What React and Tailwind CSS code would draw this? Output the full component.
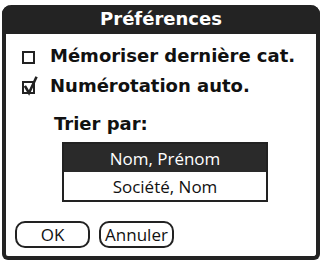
export default function App() {
  const font = { fontFamily: '"DejaVu Sans", sans-serif' };
  const thin = { fontFamily: '"Open Sans", sans-serif' };
  return (
    <div className="w-[326px] h-[262px] bg-white relative" style={font}>
      <div className="absolute left-[2px] top-[5px] w-[318px] h-[255px] border-[4px] border-t-0 border-[#232323] rounded-t-[9px] rounded-b-[6px] flex flex-col">
        <div className="h-[29px] bg-[#232323] -mx-[4px] rounded-t-[9px] flex items-center justify-center text-white font-bold text-[18px] leading-none pb-[1px]">
          Préférences
        </div>
        <div className="flex flex-col pl-[16px] pt-[13px]">
          <div className="flex items-center h-[18px]">
            <div className="w-[13px] h-[13px] min-w-[13px] shrink-0 border-[2px] border-[#222] mt-[2px]" />
            <span className="ml-[15px] font-bold text-[18px] leading-none text-[#111]">Mémoriser dernière cat.</span>
          </div>
          <div className="flex items-center h-[18px] mt-[12px]">
            <div className="w-[13px] h-[13px] min-w-[13px] shrink-0 border-[2px] border-[#222] relative mt-[2px]">
              <svg className="absolute -left-[2px] -top-[7px] overflow-visible" width="18" height="18" viewBox="0 0 18 18">
                <path d="M3.5 11 L7 17 L14 2" stroke="#222" strokeWidth="2.6" fill="none" strokeLinecap="square" />
              </svg>
            </div>
            <span className="ml-[15px] font-bold text-[18px] leading-none text-[#111]">Numérotation auto.</span>
          </div>
          <div className="ml-[32px] mt-[20px] font-bold text-[18px] leading-none text-[#111]">Trier par:</div>
          <div className="ml-[40px] mt-[9px] w-[206px] border-[2px] border-[#222] flex flex-col" style={thin}>
            <div className="h-[28px] bg-[#2a2a2a] text-white flex items-center justify-center text-[17px] leading-none">Nom, Prénom</div>
            <div className="h-[28px] bg-white text-[#111] flex items-center justify-center text-[17px] leading-none">Société, Nom</div>
          </div>
        </div>
        <div className="flex gap-[9px] pl-[9px] mt-[19px]" style={thin}>
          <div className="w-[75px] h-[27px] border-[2px] border-[#222] rounded-[10px] flex items-center justify-center text-[17px] leading-none text-[#111]">OK</div>
          <div className="w-[75px] h-[27px] border-[2px] border-[#222] rounded-[10px] flex items-center justify-center text-[17px] leading-none text-[#111]">Annuler</div>
        </div>
      </div>
    </div>
  );
}
